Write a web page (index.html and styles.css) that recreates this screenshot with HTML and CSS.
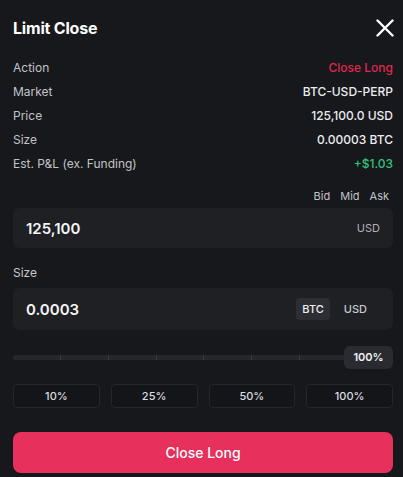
FILE: index.html
```html
<!DOCTYPE html>
<html>
<head>
<meta charset="utf-8">
<link rel="stylesheet" href="styles.css">
</head>
<body>
<div class="modal">
  <div class="header">
    <div class="title">Limit Close</div>
    <svg class="close" width="18" height="18" viewBox="0 0 18 18"><path d="M1.5 1.5 L16.5 16.5 M16.5 1.5 L1.5 16.5" stroke="#ffffff" stroke-width="2.4" stroke-linecap="round"/></svg>
  </div>
  <div class="rows">
    <div class="row"><span class="label">Action</span><span class="value red">Close Long</span></div>
    <div class="row"><span class="label">Market</span><span class="value">BTC-USD-PERP</span></div>
    <div class="row"><span class="label">Price</span><span class="value">125,100.0 USD</span></div>
    <div class="row"><span class="label">Size</span><span class="value">0.00003 BTC</span></div>
    <div class="row"><span class="label">Est. P&amp;L (ex. Funding)</span><span class="value green">+$1.03</span></div>
  </div>
  <div class="quick">
    <span>Bid</span><span>Mid</span><span>Ask</span>
  </div>
  <div class="field">
    <span class="field-value">125,100</span>
    <span class="unit">USD</span>
  </div>
  <div class="size-label">Size</div>
  <div class="field field-size">
    <span class="field-value">0.0003</span>
    <div class="toggle">
      <span class="chip active">BTC</span>
      <span class="chip">USD</span>
    </div>
  </div>
  <div class="slider">
    <div class="track">
      <span class="tick"></span><span class="tick"></span><span class="tick"></span><span class="tick"></span><span class="tick"></span><span class="tick"></span>
    </div>
    <div class="knob">100%</div>
  </div>
  <div class="pcts">
    <button class="pct">10%</button>
    <button class="pct">25%</button>
    <button class="pct">50%</button>
    <button class="pct">100%</button>
  </div>
  <button class="submit">Close Long</button>
</div>
</body>
</html>
```
FILE: styles.css
```css
* { box-sizing: border-box; }
html, body {
  margin: 0;
  padding: 0;
  background: #17181c;
  font-family: Inter, "Noto Sans", sans-serif;
  color: #ececee;
}
.modal {
  width: 403px;
  height: 477px;
  padding: 0 10px 0 13px;
  display: flex;
  flex-direction: column;
}
.header {
  height: 55px;
  display: flex;
  align-items: center;
  justify-content: space-between;
}
.title {
  font-size: 16px;
  font-weight: 700;
  color: #ffffff;
  letter-spacing: -0.2px;
}
.close { display: block; margin-right: -1px; }
.rows { display: flex; flex-direction: column; }
.row {
  height: 24px;
  display: flex;
  align-items: center;
  justify-content: space-between;
  font-size: 12px;
}
.label { color: #c2c3c7; }
.value { color: #ececee; font-weight: 500; }
.red { color: #e0264f; }
.green { color: #2ec27e; }
.quick {
  margin-top: 11px;
  height: 20px;
  display: flex;
  justify-content: flex-end;
  align-items: center;
  gap: 10px;
  font-size: 11px;
  color: #c2c3c7;
  padding-right: 4px;
}
.field {
  margin-top: 2px;
  height: 40px;
  background: #1f2024;
  border-radius: 7px;
  display: flex;
  align-items: center;
  justify-content: space-between;
  padding: 0 13px;
}
.field-value {
  font-size: 15px;
  font-weight: 600;
  color: #f4f4f5;
}
.unit { font-size: 11px; color: #b0b1b5; }
.size-label {
  margin-top: 14px;
  height: 20px;
  display: flex;
  align-items: center;
  font-size: 12px;
  color: #c8c9cc;
}
.field-size { margin-top: 6px; height: 42px; padding-right: 20px; }
.toggle { display: flex; align-items: center; gap: 8px; }
.chip {
  font-size: 11px;
  font-weight: 500;
  color: #c8c9cc;
  height: 22px;
  padding: 0 6px;
  display: flex;
  align-items: center;
  border-radius: 4px;
}
.chip.active { background: #2d2e33; color: #eeeef0; }
.slider {
  margin-top: 15px;
  height: 24px;
  display: flex;
  align-items: center;
}
.track {
  flex: 1;
  height: 5px;
  background: #26272b;
  border-radius: 3px;
  display: flex;
  justify-content: space-between;
  padding: 0 50px 0 47px;
}
.tick { width: 1px; height: 5px; background: #38393e; }
.knob {
  width: 49px;
  height: 23px;
  background: #2a2b30;
  border-radius: 6px;
  display: flex;
  align-items: center;
  justify-content: center;
  font-size: 11px;
  font-weight: 600;
  color: #f0f0f2;
  margin-left: -6px;
}
.pcts {
  margin-top: 15px;
  display: grid;
  grid-template-columns: repeat(4, 1fr);
  gap: 11px;
}
.pct {
  height: 24px;
  background: #141518;
  border: 1px solid #26272c;
  border-radius: 4px;
  font-family: Inter, "Noto Sans", sans-serif;
  font-size: 11px;
  font-weight: 500;
  color: #dcdde0;
  padding: 0;
}
.submit {
  margin-top: 24px;
  height: 41px;
  border: none;
  border-radius: 8px;
  background: #e8305c;
  color: #ffffff;
  font-family: Inter, "Noto Sans", sans-serif;
  font-size: 14px;
  font-weight: 500;
}
```
